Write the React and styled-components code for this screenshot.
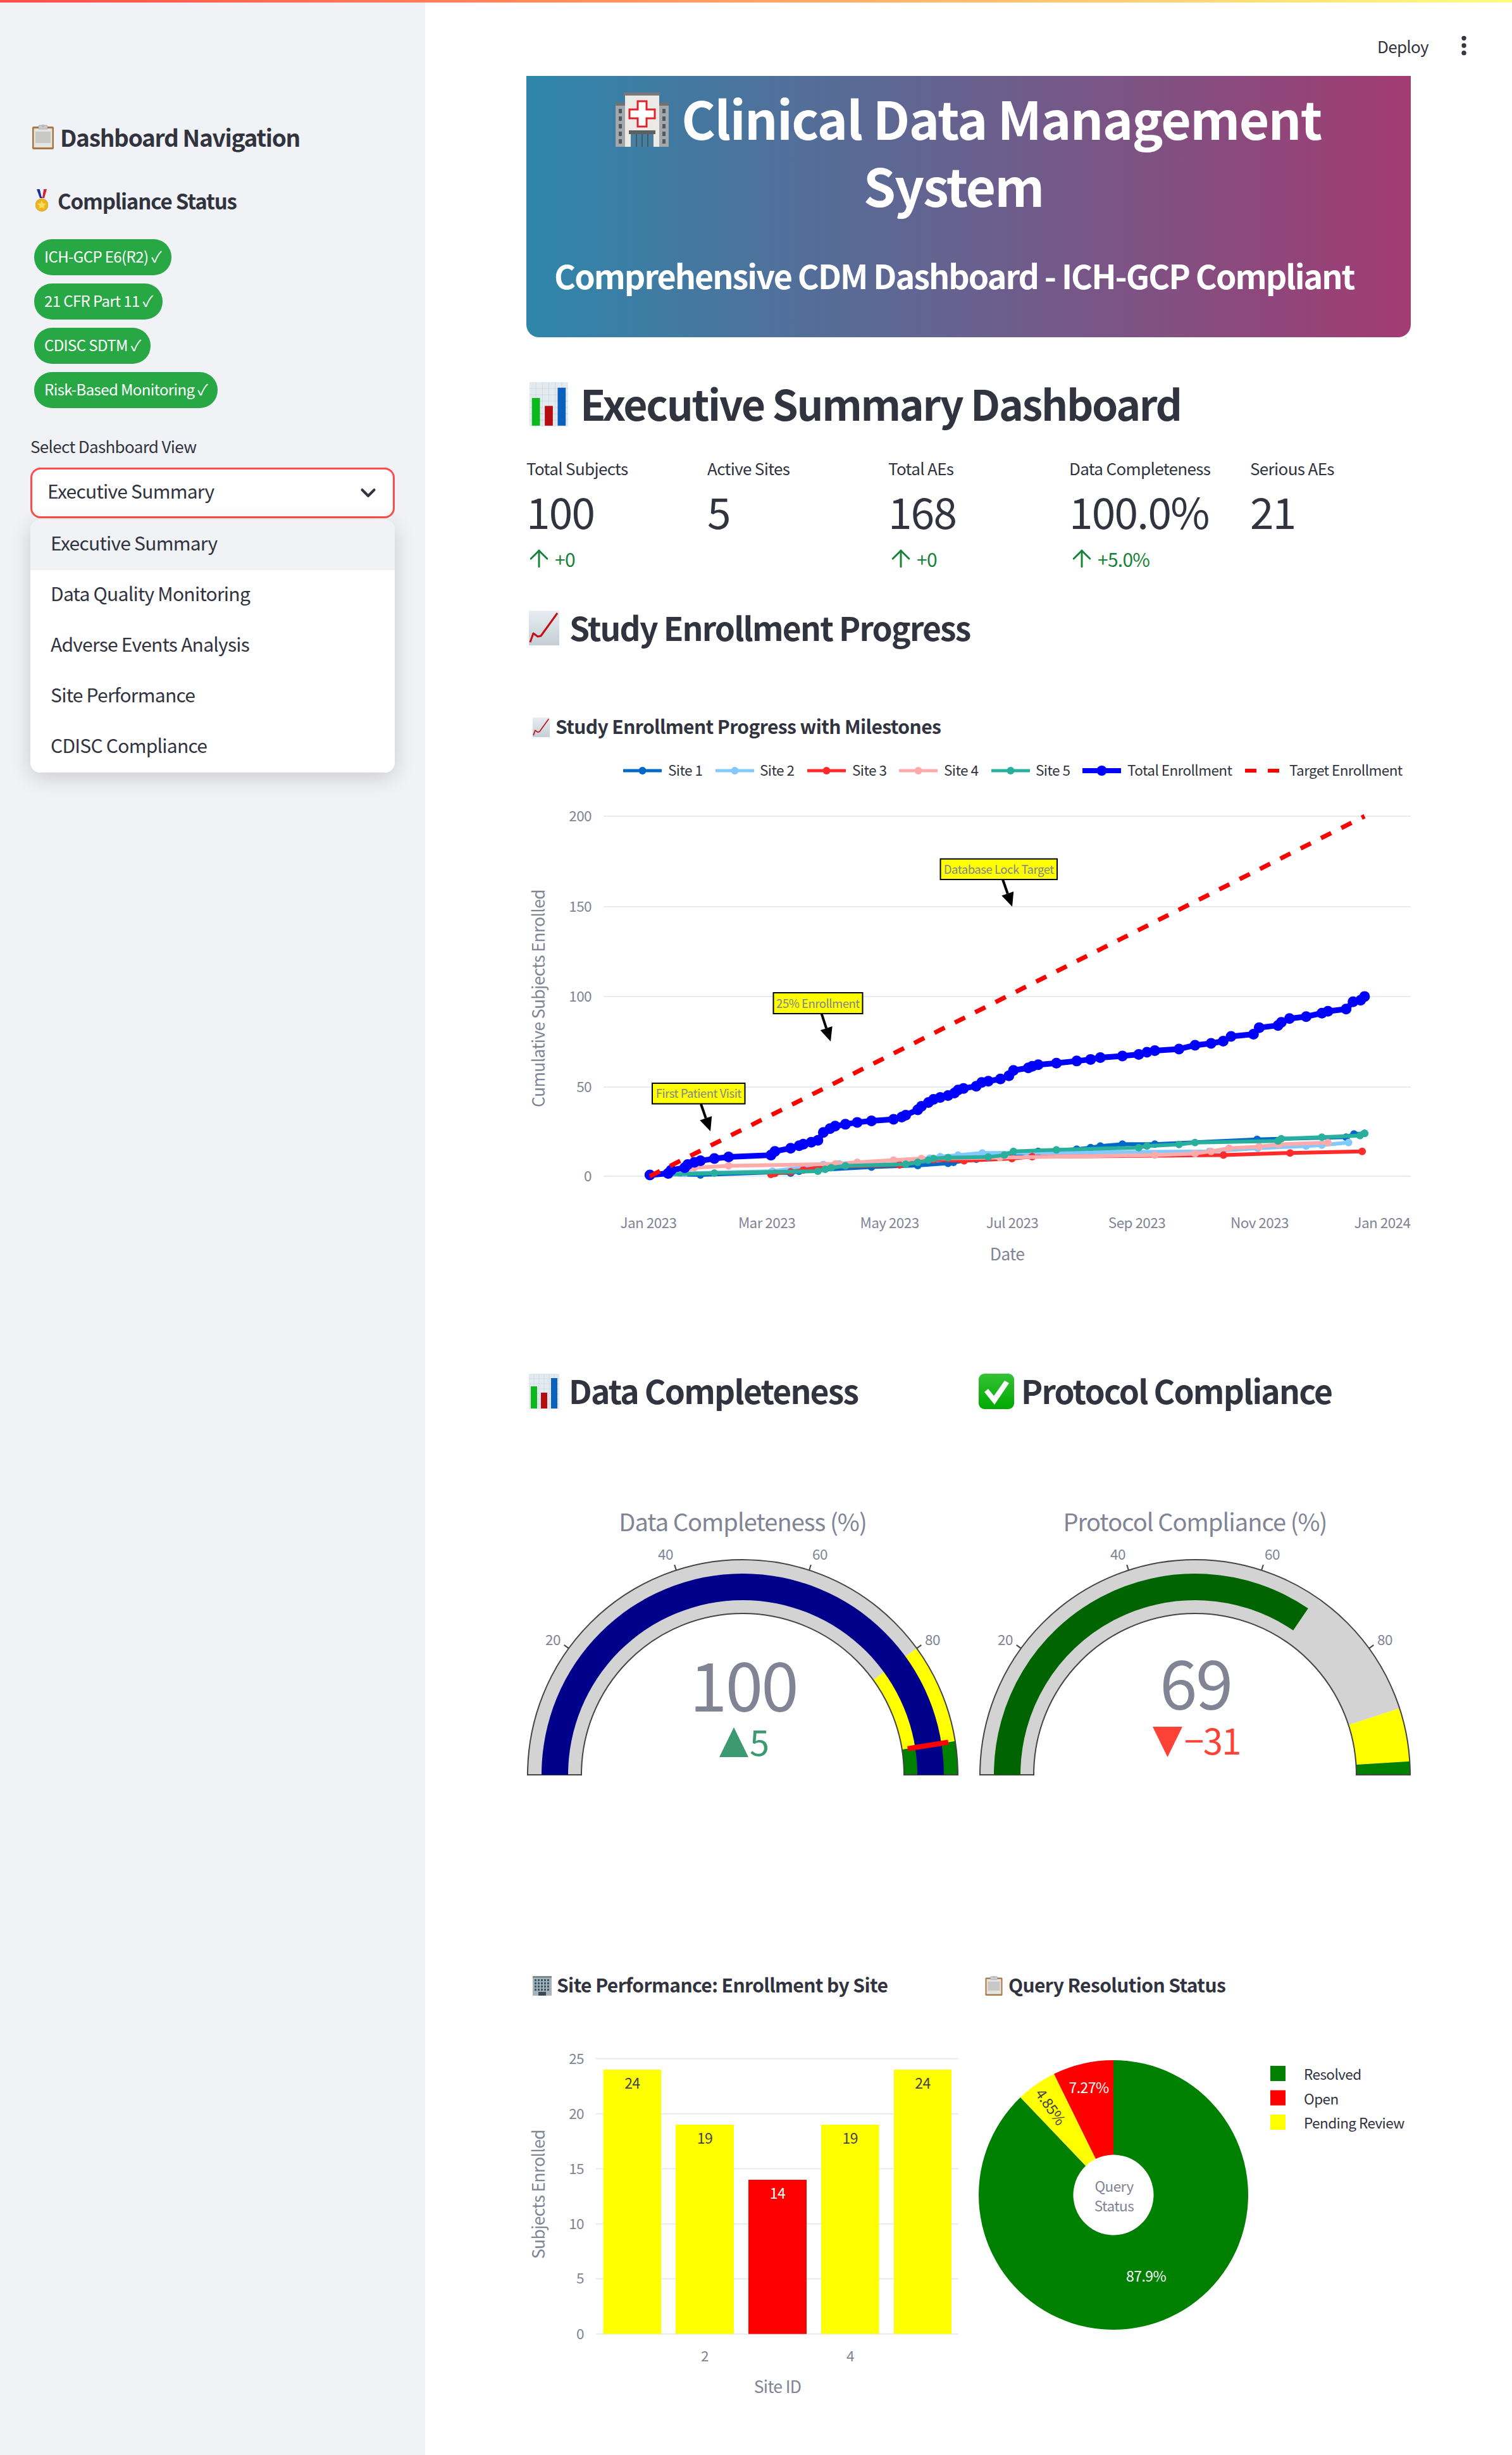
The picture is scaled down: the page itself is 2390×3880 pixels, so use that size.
import React from 'react'
import styled, { createGlobalStyle } from 'styled-components'
import { ArrowUp, ChevronDown, EllipsisVertical } from 'lucide-react'

const GlobalStyle = createGlobalStyle`
  html, body { margin: 0; padding: 0; background: #fff; overflow: hidden; }
  body {
    font-family: "Noto Sans CJK SC", "Noto Sans", sans-serif;
    color: #31333f;
  }
  * { box-sizing: border-box; letter-spacing: -0.025em; }
  svg text { font-family: "Noto Sans CJK SC", "Noto Sans", sans-serif; }
`

const TopBar = styled.div`
  height: 4px;
  background: linear-gradient(90deg, #ff4b4b, #fffd80);
`
const Shell = styled.div`
  display: flex;
  height: 3876px;
`
const Sidebar = styled.aside`
  width: 672px;
  flex: none;
  background: #f0f2f6;
  padding: 182px 48px 0;
`
const NavTitle = styled.h2`
  display: flex;
  align-items: center;
  gap: ${p => p.$gap || 12}px;
  height: ${p => p.$h}px;
  margin: ${p => p.$mt || 0}px 0 0;
  padding: 0 0 ${p => p.$pb || 0}px ${p => p.$pl || 0}px;
  font-size: ${p => p.$size}px;
  font-weight: 600;
  letter-spacing: -0.035em;
  white-space: nowrap;
`
const PillList = styled.div`
  display: flex;
  flex-direction: column;
  align-items: flex-start;
  gap: 13.5px;
  margin: 35px 0 0 6px;
`
const Pill = styled.span`
  height: 56.5px;
  display: flex;
  align-items: center;
  padding: 0 16px 3px;
  border-radius: 28px;
  background: #28a745;
  color: #fff;
  font-size: 24px;
  white-space: nowrap;
`
const FieldLabel = styled.div`
  margin-top: 41px;
  height: 38px;
  line-height: 38px;
  font-size: 26px;
`
const SelectWrap = styled.div`
  position: relative;
  margin-top: 15px;
`
const SelectBox = styled.div`
  height: 80px;
  display: flex;
  align-items: center;
  justify-content: space-between;
  padding: 0 20px 7px 24px;
  background: #fff;
  border: 3px solid #ff4b4b;
  border-radius: 16px;
  font-size: 30px;
  svg { margin-top: 7px; }
`
const Dropdown = styled.ul`
  position: absolute;
  top: 82px;
  left: 0;
  right: 0;
  margin: 0;
  padding: 0;
  list-style: none;
  background: #fff;
  border-radius: 16px;
  overflow: hidden;
  box-shadow: 0 8px 32px rgba(0, 0, 0, 0.16);
`
const Option = styled.li`
  height: 80px;
  display: flex;
  align-items: center;
  padding: 0 0 8px 32px;
  font-size: 30px;
  background: ${p => (p.$active ? '#f0f2f6' : '#fff')};
`

const Main = styled.main`
  flex: 1;
  min-width: 0;
`
const Toolbar = styled.header`
  height: 116px;
  padding: 20px 56px 0 0;
  display: flex;
  align-items: center;
  justify-content: flex-end;
  gap: 36px;
  font-size: 26px;
`
const Content = styled.div`
  padding: 0 160px;
`
const Hero = styled.section`
  height: 413px;
  padding: 13px 44px 0;
  color: #fff;
  background: linear-gradient(90deg, #2e86ab, #a23b72);
  border-radius: 0 0 20px 20px;
`
const HeroTitle = styled.h1`
  margin: 0;
  font-size: 82px;
  line-height: 106px;
  font-weight: 700;
  letter-spacing: -0.02em;
  text-align: center;
`
const HeroIcon = styled.span`
  display: inline-block;
  line-height: 0;
  vertical-align: -11px;
  margin-right: 3px;
`
const HeroLastWord = styled.span`
  display: inline-block;
  padding-right: 48px;
`
const HeroSub = styled.p`
  margin: 51px 0 0;
  font-size: 52px;
  line-height: 78px;
  font-weight: 600;
  letter-spacing: -0.038em;
  white-space: nowrap;
`
const Heading = styled.h2`
  display: flex;
  align-items: center;
  gap: ${p => p.$gap}px;
  height: ${p => p.$h}px;
  margin: ${p => p.$mt || 0}px 0 0;
  padding: 0 0 8px ${p => p.$pl || 0}px;
  font-size: ${p => p.$size}px;
  font-weight: 600;
  letter-spacing: -0.035em;
  white-space: nowrap;
  svg { margin-top: 5px; }
`
const Metrics = styled.div`
  display: grid;
  grid-template-columns: repeat(5, 286px);
  margin-top: 27.5px;
`
const MetricLabel = styled.div`
  height: 44px;
  line-height: 44px;
  font-size: 26px;
`
const MetricValue = styled.div`
  height: 80px;
  line-height: 80px;
  margin-top: 5.5px;
  font-size: 67.5px;
`
const MetricDelta = styled.div`
  height: 40px;
  margin-top: 15.5px;
  display: flex;
  align-items: center;
  gap: 3px;
  font-size: 30px;
  color: #158237;
  svg { margin-left: -2px; }
`
const ChartTitle = styled.div`
  display: flex;
  align-items: center;
  gap: ${p => p.$gap || 9}px;
  height: 40px;
  margin-top: ${p => p.$mt || 0}px;
  padding: 0 0 4px 10px;
  font-size: 30px;
  font-weight: 700;
  letter-spacing: -0.02em;
  white-space: nowrap;
  svg { margin-top: 4px; }
`
const TwoCol = styled.div`
  display: grid;
  grid-template-columns: 683px 683px;
  column-gap: 32px;
  margin-top: ${p => p.$mt}px;
`
const ChartSvg = styled.svg`
  display: block;
`
const Tick = styled.text`
  font-size: 22.5px;
  fill: #808495;
  text-anchor: ${p => p.$anchor || 'middle'};
`
const AxisName = styled.text`
  font-size: 26.5px;
  fill: #808495;
  text-anchor: middle;
`
const LegendText = styled.text`
  font-size: 22.5px;
  fill: #31333f;
`
const NoteText = styled.text`
  font-size: 18.5px;
  fill: #808495;
  text-anchor: middle;
`
const GaugeTitle = styled.text`
  font-size: 38px;
  fill: #808495;
  text-anchor: middle;
`
const GaugeValue = styled.text`
  font-size: 107px;
  fill: #808495;
  text-anchor: middle;
`
const GaugeDelta = styled.text`
  font-size: 56px;
  fill: ${p => p.$color};
`
const BarLabel = styled.text`
  font-size: 23px;
  fill: ${p => p.$color};
  text-anchor: middle;
`

// emoji, drawn since no colour emoji font is around
const ClipboardIcon = ({ w, h }) => (
  <svg width={w} height={h} viewBox="0 0 34 39" style={{ flex: 'none' }}>
    <rect x="0" y="3" width="34" height="36" rx="2" fill="#a9763f" />
    <rect x="2.5" y="6" width="29" height="30" fill="#e4e4e2" />
    <rect x="5" y="11" width="24" height="18" fill="#c8c8c6" />
    <rect x="10" y="1" width="14" height="6" rx="1.5" fill="#c9ccd0" stroke="#8d9095" strokeWidth="0.6" />
    <circle cx="17" cy="1.8" r="1.6" fill="#c9ccd0" stroke="#8d9095" strokeWidth="0.6" />
  </svg>
)
const MedalIcon = () => (
  <svg width="20" height="36" viewBox="0 0 20 36" style={{ flex: 'none', margin: '0 6px 0 8px' }}>
    <path d="M2 0h5l4 14h-4z" fill="#1c2f9e" />
    <path d="M13 0h5l-4 14h-3z" fill="#d32232" />
    <path d="M7 0h6l-2.5 12h-1z" fill="#f2f2f2" />
    <circle cx="10" cy="25" r="10" fill="#eab51f" stroke="#d39b14" strokeWidth="0.8" />
    <path d="M10 18l2 4.6 5 .4-3.8 3.2 1.2 4.8-4.4-2.6-4.4 2.6 1.2-4.8L3 23l5-.4z" fill="#fbdc62" />
  </svg>
)
const HospitalIcon = () => (
  <svg width="84" height="86" viewBox="0 0 84 86">
    <rect x="0" y="18" width="84" height="68" fill="#a5a8aa" />
    <rect x="0" y="16" width="18" height="5" fill="#6f7173" />
    <rect x="66" y="16" width="18" height="5" fill="#6f7173" />
    <rect x="15" y="4" width="54" height="82" fill="#eceae6" />
    <rect x="13" y="0" width="58" height="5" fill="#77797b" />
    <path d="M35 14h14v13h13v14H49v13H35V41H22V27h13z" fill="#fff" stroke="#e0222e" strokeWidth="3" />
    {[26, 38, 50, 62, 74].map(y => (
      <g key={y}>
        <rect x="5" y={y} width="5" height="7" fill="#4e5a60" />
        <rect x="74" y={y} width="5" height="7" fill="#4e5a60" />
      </g>
    ))}
    <rect x="21" y="60" width="42" height="6" fill="#5d6063" />
    <rect x="24" y="66" width="36" height="20" fill="#4b7d9c" />
    <path d="M33 66v20M42 66v20M51 66v20" stroke="#2f5168" strokeWidth="1.5" />
  </svg>
)
const BarsIcon = ({ w, h }) => (
  <svg width={w} height={h} viewBox="0 0 48 56" preserveAspectRatio="none" style={{ flex: 'none' }}>
    <rect width="48" height="56" fill="#e3eaf0" />
    <path d="M0 8h48M0 16h48M0 24h48M0 32h48M0 40h48M0 48h48M8 0v56M16 0v56M24 0v56M32 0v56M40 0v56" stroke="#cbd5df" strokeWidth="0.6" />
    <rect x="3" y="20" width="10" height="35" fill="#0db81a" />
    <rect x="19" y="30" width="10" height="25" fill="#b50d10" />
    <rect x="35" y="7" width="10" height="48" fill="#0b60bd" />
  </svg>
)
const TrendIcon = ({ w, h }) => (
  <svg width={w} height={h} viewBox="0 0 48 55" style={{ flex: 'none' }}>
    <defs>
      <linearGradient id="trendbg" x1="0" y1="0" x2="0" y2="1">
        <stop offset="0" stopColor="#e7edf2" />
        <stop offset="1" stopColor="#c5ced6" />
      </linearGradient>
    </defs>
    <rect width="48" height="55" fill="url(#trendbg)" />
    <path d="M2 50 L7 36 L14 41 L19 40 L45 4" fill="none" stroke="#c40f12" strokeWidth="3" strokeLinejoin="round" />
  </svg>
)
const CheckIcon = () => (
  <svg width="56" height="56" viewBox="0 0 56 56" style={{ flex: 'none' }}>
    <defs>
      <linearGradient id="checkbg" x1="0" y1="0" x2="0" y2="1">
        <stop offset="0" stopColor="#35c236" />
        <stop offset="1" stopColor="#00a800" />
      </linearGradient>
    </defs>
    <rect width="56" height="56" rx="9" fill="url(#checkbg)" />
    <path d="M9 29l6-5 9 11L41 11l7 4-23 34z" fill="#fff" />
  </svg>
)
const OfficeIcon = () => (
  <svg width="30" height="31" viewBox="0 0 30 31" style={{ flex: 'none' }}>
    <rect y="1" width="30" height="30" fill="#a7b3b8" />
    <rect width="30" height="3" fill="#7c8a90" />
    {[5, 10, 15, 20].map(y =>
      [3, 8, 13, 18, 23].map(x => <rect key={x + '-' + y} x={x} y={y} width="3" height="3.2" fill="#35566b" />)
    )}
    <rect x="9" y="25" width="12" height="6" fill="#3b4a52" />
  </svg>
)

// points read off the chart, as [x, y] on two crops that meet at x=1500
const leftPt = ([x, y]) => [800 + x / 2.09, 1250 + y / 2.01]
const rightPt = ([x, y]) => [1500 + x / 2.09, 1250 + y / 2.01]
const series = (left, right) => [...left.map(leftPt), ...right.map(rightPt)]

const SITES = [
  {
    color: '#0068c9',
    pts: series(
      [[540, 1218], [642, 1220], [875, 1212], [940, 1214], [968, 1208], [1207, 1195], [1360, 1190], [1460, 1183]],
      [[15, 1180], [90, 1170], [295, 1145], [422, 1138], [468, 1133], [500, 1128], [573, 1122], [680, 1122], [1018, 1107], [1312, 1100], [1338, 1090], [1373, 1088]]
    ),
  },
  {
    color: '#83c9ff',
    pts: series(
      [[540, 1220], [590, 1215], [880, 1208], [1048, 1187], [1100, 1185], [1400, 1167], [1434, 1162]],
      [[30, 1157], [110, 1150], [500, 1148], [860, 1145], [1020, 1135], [1180, 1128], [1232, 1125], [1320, 1117]]
    ),
  },
  {
    color: '#ff2b2b',
    pts: series(
      [[875, 1218], [888, 1215], [940, 1210], [982, 1204], [1040, 1195], [1300, 1188], [1412, 1172]],
      [[50, 1175], [208, 1168], [275, 1162], [907, 1157], [1127, 1150], [1365, 1145]]
    ),
  },
  {
    color: '#ffabab',
    pts: series(
      [[590, 1210], [622, 1197], [735, 1191], [1088, 1185], [1160, 1180], [1280, 1173], [1372, 1168]],
      [[168, 1165], [680, 1157], [813, 1152], [866, 1145], [925, 1135], [1025, 1130], [1090, 1123], [1252, 1117]]
    ),
  },
  {
    color: '#29b09d',
    pts: series(
      [[535, 1218], [688, 1214], [1030, 1208], [1054, 1202], [1074, 1197], [1121, 1191], [1320, 1186], [1360, 1180], [1395, 1173], [1412, 1168], [1460, 1165]],
      [[130, 1163], [183, 1157], [213, 1145], [355, 1140], [627, 1133], [654, 1128], [760, 1123], [813, 1117], [1087, 1112], [1098, 1105], [1232, 1100], [1358, 1095], [1373, 1088]]
    ),
  },
]
const TOTAL = series(
  [[475, 1220], [535, 1215], [545, 1205], [590, 1197], [600, 1187], [622, 1180], [642, 1175], [688, 1168], [735, 1163], [875, 1157], [888, 1145], [940, 1135], [968, 1127], [982, 1122], [1008, 1116], [1030, 1110], [1048, 1085], [1070, 1073], [1087, 1065], [1121, 1059], [1160, 1053], [1207, 1048], [1280, 1043], [1307, 1036], [1320, 1030], [1360, 1013], [1372, 1002], [1395, 990], [1412, 980], [1434, 974], [1460, 968]],
  [[18, 960], [30, 950], [48, 945], [90, 938], [108, 926], [130, 922], [170, 915], [198, 905], [213, 888], [262, 880], [275, 875], [295, 870], [355, 865], [422, 858], [468, 853], [500, 847], [573, 842], [627, 837], [654, 830], [680, 825], [760, 820], [813, 808], [866, 802], [906, 795], [932, 780], [1006, 773], [1025, 752], [1087, 745], [1098, 735], [1125, 723], [1180, 717], [1232, 706], [1252, 700], [1312, 693], [1335, 670], [1360, 665], [1373, 653]]
)
const LEGEND = [
  { label: 'Site 1', color: '#0068c9', x: 985, tx: 1056 },
  { label: 'Site 2', color: '#83c9ff', x: 1131, tx: 1201 },
  { label: 'Site 3', color: '#ff2b2b', x: 1276, tx: 1347 },
  { label: 'Site 4', color: '#ffabab', x: 1421, tx: 1492 },
  { label: 'Site 5', color: '#29b09d', x: 1567, tx: 1637 },
  { label: 'Total Enrollment', color: '#0000ff', x: 1711, tx: 1782, bold: true },
]
const NOTES = [
  { text: 'First Patient Visit', box: [1031, 1712, 146.5, 32.5], from: [1108, 1745], to: [1123, 1788] },
  { text: '25% Enrollment', box: [1222.5, 1569, 141, 33], from: [1298.6, 1602], to: [1313, 1646] },
  { text: 'Database Lock Target', box: [1486.5, 1357.5, 184.5, 32.5], from: [1585, 1390], to: [1600, 1433] },
]
const Y_TICKS = [[200, 1290], [150, 1433], [100, 1575], [50, 1718], [0, 1859]]
const X_TICKS = [['Jan 2023', 1025], ['Mar 2023', 1212], ['May 2023', 1406], ['Jul 2023', 1600], ['Sep 2023', 1797], ['Nov 2023', 1991], ['Jan 2024', 2185]]

const toLine = pts => pts.map(p => p.join(',')).join(' ')

function Arrow({ from, to }) {
  const len = Math.hypot(to[0] - from[0], to[1] - from[1])
  const ux = (to[0] - from[0]) / len
  const uy = (to[1] - from[1]) / len
  const bx = to[0] - ux * 22
  const by = to[1] - uy * 22
  const head = [to, [bx - uy * 10, by + ux * 10], [bx + uy * 10, by - ux * 10]]
  return (
    <g>
      <line x1={from[0]} y1={from[1]} x2={bx} y2={by} stroke="#000" strokeWidth="4" />
      <polygon points={toLine(head)} fill="#000" />
    </g>
  )
}

function EnrollmentChart() {
  return (
    <ChartSvg width="1398" height="851" viewBox="832 1169 1398 851">
      {LEGEND.map(l => (
        <g key={l.label}>
          <line x1={l.x} x2={l.x + 61} y1="1218" y2="1218" stroke={l.color} strokeWidth={l.bold ? 8 : 5} />
          <circle cx={l.x + 30.5} cy="1218" r={l.bold ? 8 : 6} fill={l.color} />
          <LegendText x={l.tx} y="1226">{l.label}</LegendText>
        </g>
      ))}
      <line x1="1968" x2="2029" y1="1218" y2="1218" stroke="#ff0000" strokeWidth="6" strokeDasharray="18 18" />
      <LegendText x="2038" y="1226">Target Enrollment</LegendText>

      {Y_TICKS.map(([v, y]) => (
        <g key={v}>
          <line x1="954" x2="2230" y1={y} y2={y} stroke="#e6eaf1" strokeWidth="2" />
          <Tick x="935" y={y + 8} $anchor="end">{v}</Tick>
        </g>
      ))}
      {X_TICKS.map(([t, x]) => <Tick key={t} x={x} y="1941">{t}</Tick>)}
      <AxisName x="1592" y="1992">Date</AxisName>
      <AxisName transform="translate(861 1578) rotate(-90)">Cumulative Subjects Enrolled</AxisName>

      {SITES.map(s => (
        <g key={s.color}>
          <polyline points={toLine(s.pts)} fill="none" stroke={s.color} strokeWidth="6" strokeLinejoin="round" />
          {s.pts.map(p => <circle key={p.join()} cx={p[0]} cy={p[1]} r="6" fill={s.color} />)}
        </g>
      ))}
      <polyline points={toLine(TOTAL)} fill="none" stroke="#0000ff" strokeWidth="9" strokeLinejoin="round" />
      {TOTAL.map(p => <circle key={p.join()} cx={p[0]} cy={p[1]} r="8.5" fill="#0000ff" />)}
      <line x1="1027" y1="1859" x2="2157" y2="1290" stroke="#ff0000" strokeWidth="7" strokeDasharray="18 18" />

      {NOTES.map(n => (
        <g key={n.text}>
          <rect x={n.box[0]} y={n.box[1]} width={n.box[2]} height={n.box[3]} fill="#ffff00" stroke="#000" strokeWidth="2" />
          <NoteText x={n.box[0] + n.box[2] / 2} y={n.box[1] + n.box[3] / 2 + 7}>{n.text}</NoteText>
          <Arrow from={n.from} to={n.to} />
        </g>
      ))}
    </ChartSvg>
  )
}

const R_OUT = 340
const R_IN = 255
// label offsets from the gauge centre
const GAUGE_TICKS = [[20, -300, -213], [40, -122, -348], [60, 122, -348], [80, 300, -213]]
const polar = (cx, cy, r, v) => {
  const a = Math.PI * (1 - v / 100)
  return [cx + r * Math.cos(a), cy - r * Math.sin(a)]
}
const band = (cx, cy, r0, r1, v0, v1) => {
  const [ax, ay] = polar(cx, cy, r1, v0)
  const [bx, by] = polar(cx, cy, r1, v1)
  const [c, d] = polar(cx, cy, r0, v1)
  const [e, f] = polar(cx, cy, r0, v0)
  return `M${ax} ${ay}A${r1} ${r1} 0 0 1 ${bx} ${by}L${c} ${d}A${r0} ${r0} 0 0 0 ${e} ${f}Z`
}

function Gauge({ vb, cx, title, value, numberY, barColor, barTo, steps, threshold, delta }) {
  const cy = 2805
  return (
    <ChartSvg width="683" height="610" viewBox={`${vb} 2240 683 610`}>
      <GaugeTitle x={cx} y="2420">{title}</GaugeTitle>
      {GAUGE_TICKS.map(([v, dx, dy]) => {
        const [x1, y1] = polar(cx, cy, R_OUT, v)
        const [x2, y2] = polar(cx, cy, R_OUT + 9, v)
        return (
          <g key={v}>
            <line x1={x1} y1={y1} x2={x2} y2={y2} stroke="#444" strokeWidth="2" />
            <Tick x={cx + dx} y={cy + dy + 8}>{v}</Tick>
          </g>
        )
      })}
      {steps.map(s => <path key={s.from} d={band(cx, cy, R_IN, R_OUT, s.from, s.to)} fill={s.color} />)}
      <path d={band(cx, cy, R_IN, R_OUT, 0, 100)} fill="none" stroke="#444" strokeWidth="2" />
      <path d={band(cx, cy, 276, 318, 0, barTo)} fill={barColor} />
      {threshold && (
        <line
          x1={polar(cx, cy, 264, threshold)[0]}
          y1={polar(cx, cy, 264, threshold)[1]}
          x2={polar(cx, cy, 329, threshold)[0]}
          y2={polar(cx, cy, 329, threshold)[1]}
          stroke="#ff0000"
          strokeWidth="8"
        />
      )}
      <GaugeValue x={cx + 1} y={numberY}>{value}</GaugeValue>
      <polygon points={delta.tri} fill={delta.color} />
      <GaugeDelta x={delta.x} y={delta.y} $color={delta.color}>{delta.text}</GaugeDelta>
    </ChartSvg>
  )
}

const BARS = [
  { x: 953.6, w: 91.5, top: 3271, v: 24, color: '#ffff00', ink: '#444' },
  { x: 1068, w: 92, top: 3358, v: 19, color: '#ffff00', ink: '#444' },
  { x: 1183, w: 92, top: 3445, v: 14, color: '#ff0000', ink: '#fff' },
  { x: 1298, w: 91.5, top: 3358, v: 19, color: '#ffff00', ink: '#444' },
  { x: 1413, w: 91, top: 3271, v: 24, color: '#ffff00', ink: '#444' },
]

function SiteChart() {
  const ticks = [[25, 3253.5], [20, 3340.7], [15, 3427.5], [10, 3514.7], [5, 3601.4], [0, 3688.7]]
  return (
    <ChartSvg width="683" height="718" viewBox="832 3158 683 718">
      {ticks.map(([v, y]) => (
        <g key={v}>
          <line x1="942" x2="1515" y1={y} y2={y} stroke="#e6eaf1" strokeWidth="2" />
          <Tick x="923" y={y + 8} $anchor="end">{v}</Tick>
        </g>
      ))}
      {BARS.map(b => (
        <g key={b.x}>
          <rect x={b.x} y={b.top} width={b.w} height={3688.7 - b.top} fill={b.color} />
          <BarLabel x={b.x + b.w / 2} y={b.top + 30} $color={b.ink}>{b.v}</BarLabel>
        </g>
      ))}
      <Tick x="1114" y="3732">2</Tick>
      <Tick x="1344" y="3732">4</Tick>
      <AxisName x="1229" y="3782">Site ID</AxisName>
      <AxisName transform="translate(861 3468) rotate(-90)">Subjects Enrolled</AxisName>
    </ChartSvg>
  )
}

const PIE = [
  { share: 87.88, color: '#008000', label: 'Resolved' },
  { share: 4.85, color: '#ffff00', label: 'Pending Review' },
  { share: 7.27, color: '#ff0000', label: 'Open' },
]
const PIE_LEGEND = [
  { label: 'Resolved', color: '#008000' },
  { label: 'Open', color: '#ff0000' },
  { label: 'Pending Review', color: '#ffff00' },
]

function QueryChart() {
  const cx = 1760
  const cy = 3469
  const at = (r, s) => {
    const a = (s / 100) * 2 * Math.PI
    return [cx + r * Math.sin(a), cy - r * Math.cos(a)]
  }
  let start = 0
  const slices = PIE.map(p => {
    const end = start + p.share
    const [a, b] = at(213, start)
    const [c, d] = at(213, end)
    const [e, f] = at(63.5, end)
    const [g, h] = at(63.5, start)
    const large = p.share > 50 ? 1 : 0
    const d_ = `M${a} ${b}A213 213 0 ${large} 1 ${c} ${d}L${e} ${f}A63.5 63.5 0 ${large} 0 ${g} ${h}Z`
    start = end
    return { ...p, d: d_ }
  })
  return (
    <ChartSvg width="683" height="718" viewBox="1547 3158 683 718">
      {slices.map(s => <path key={s.label} d={s.d} fill={s.color} />)}
      <BarLabel x="1811.5" y="3606" $color="#fff">87.9%</BarLabel>
      <BarLabel x="1721" y="3308" $color="#fff">7.27%</BarLabel>
      <BarLabel transform="translate(1660 3330) rotate(55) translate(0 8)" $color="#444">4.85%</BarLabel>
      <Tick x="1761" y="3464">Query</Tick>
      <Tick x="1761" y="3495">Status</Tick>
      {PIE_LEGEND.map((l, i) => (
        <g key={l.label}>
          <rect x="2008" y={3265 + i * 38.5} width="24" height="24" fill={l.color} />
          <LegendText x="2061" y={3287 + i * 38.5}>{l.label}</LegendText>
        </g>
      ))}
    </ChartSvg>
  )
}

const METRICS = [
  { label: 'Total Subjects', value: '100', delta: '+0' },
  { label: 'Active Sites', value: '5' },
  { label: 'Total AEs', value: '168', delta: '+0' },
  { label: 'Data Completeness', value: '100.0%', delta: '+5.0%' },
  { label: 'Serious AEs', value: '21' },
]
const BADGES = ['ICH-GCP E6(R2) ✓', '21 CFR Part 11 ✓', 'CDISC SDTM ✓', 'Risk-Based Monitoring ✓']
const VIEWS = ['Executive Summary', 'Data Quality Monitoring', 'Adverse Events Analysis', 'Site Performance', 'CDISC Compliance']

export default function App() {
  return (
    <>
      <GlobalStyle />
      <TopBar />
      <Shell>
        <Sidebar>
          <NavTitle $h={60} $size={37} $pl={3} $gap={10}>
            <ClipboardIcon w={34} h={39} />
            Dashboard Navigation
          </NavTitle>
          <NavTitle $h={50} $size={33} $mt={47} $gap={9} $pb={3}>
            <MedalIcon />
            Compliance Status
          </NavTitle>
          <PillList>
            {BADGES.map(b => <Pill key={b}>{b}</Pill>)}
          </PillList>
          <FieldLabel>Select Dashboard View</FieldLabel>
          <SelectWrap>
            <SelectBox>
              Executive Summary
              <ChevronDown size={38} strokeWidth={2.6} />
            </SelectBox>
            <Dropdown>
              {VIEWS.map((v, i) => <Option key={v} $active={i === 0}>{v}</Option>)}
            </Dropdown>
          </SelectWrap>
        </Sidebar>

        <Main>
          <Toolbar>
            <span>Deploy</span>
            <EllipsisVertical size={40} strokeWidth={2.4} />
          </Toolbar>
          <Content>
            <Hero>
              <HeroTitle>
                <HeroIcon><HospitalIcon /></HeroIcon> Clinical Data Management <HeroLastWord>System</HeroLastWord>
              </HeroTitle>
              <HeroSub>Comprehensive CDM Dashboard - ICH-GCP Compliant</HeroSub>
            </Hero>

            <Heading $h={100} $size={66} $mt={57} $gap={19} $pl={5}>
              <BarsIcon w={61} h={70} />
              Executive Summary Dashboard
            </Heading>

            <Metrics>
              {METRICS.map(m => (
                <div key={m.label}>
                  <MetricLabel>{m.label}</MetricLabel>
                  <MetricValue>{m.value}</MetricValue>
                  {m.delta && (
                    <MetricDelta>
                      <ArrowUp size={44} strokeWidth={1.6} />
                      {m.delta}
                    </MetricDelta>
                  )}
                </div>
              ))}
            </Metrics>

            <Heading $h={80} $size={51.5} $mt={51.5} $gap={16} $pl={4}>
              <TrendIcon w={48} h={55} />
              Study Enrollment Progress
            </Heading>

            <ChartTitle $mt={95}>
              <TrendIcon w={27} h={31} />
              Study Enrollment Progress with Milestones
            </ChartTitle>
            <EnrollmentChart />

            <TwoCol $mt={140}>
              <Heading $h={80} $size={51.5} $gap={15} $pl={4}>
                <BarsIcon w={48} h={56} />
                Data Completeness
              </Heading>
              <Heading $h={80} $size={51.5} $gap={11}>
                <CheckIcon />
                Protocol Compliance
              </Heading>
            </TwoCol>

            <TwoCol $mt={0}>
              <Gauge
                vb={832}
                cx={1174}
                title="Data Completeness (%)"
                value="100"
                numberY={2705}
                barColor="#00008b"
                barTo={100}
                threshold={95}
                steps={[
                  { from: 0, to: 80, color: '#d3d3d3' },
                  { from: 80, to: 95, color: '#ffff00' },
                  { from: 95, to: 100, color: '#008000' },
                ]}
                delta={{ color: '#3d9970', text: '5', x: 1185, y: 2775, tri: '1160,2730 1183,2777 1137,2777' }}
              />
              <Gauge
                vb={1547}
                cx={1889}
                title="Protocol Compliance (%)"
                value="69"
                numberY={2702}
                barColor="#006400"
                barTo={69}
                steps={[
                  { from: 0, to: 90, color: '#d3d3d3' },
                  { from: 90, to: 98, color: '#ffff00' },
                  { from: 98, to: 100, color: '#008000' },
                ]}
                delta={{ color: '#ff4136', text: '−31', x: 1872, y: 2773, tri: '1822,2729 1869,2729 1845.5,2777' }}
              />
            </TwoCol>

            <TwoCol $mt={268}>
              <div>
                <ChartTitle $gap={8}>
                  <OfficeIcon />
                  Site Performance: Enrollment by Site
                </ChartTitle>
                <SiteChart />
              </div>
              <div>
                <ChartTitle>
                  <ClipboardIcon w={28} h={31} />
                  Query Resolution Status
                </ChartTitle>
                <QueryChart />
              </div>
            </TwoCol>
          </Content>
        </Main>
      </Shell>
    </>
  )
}
